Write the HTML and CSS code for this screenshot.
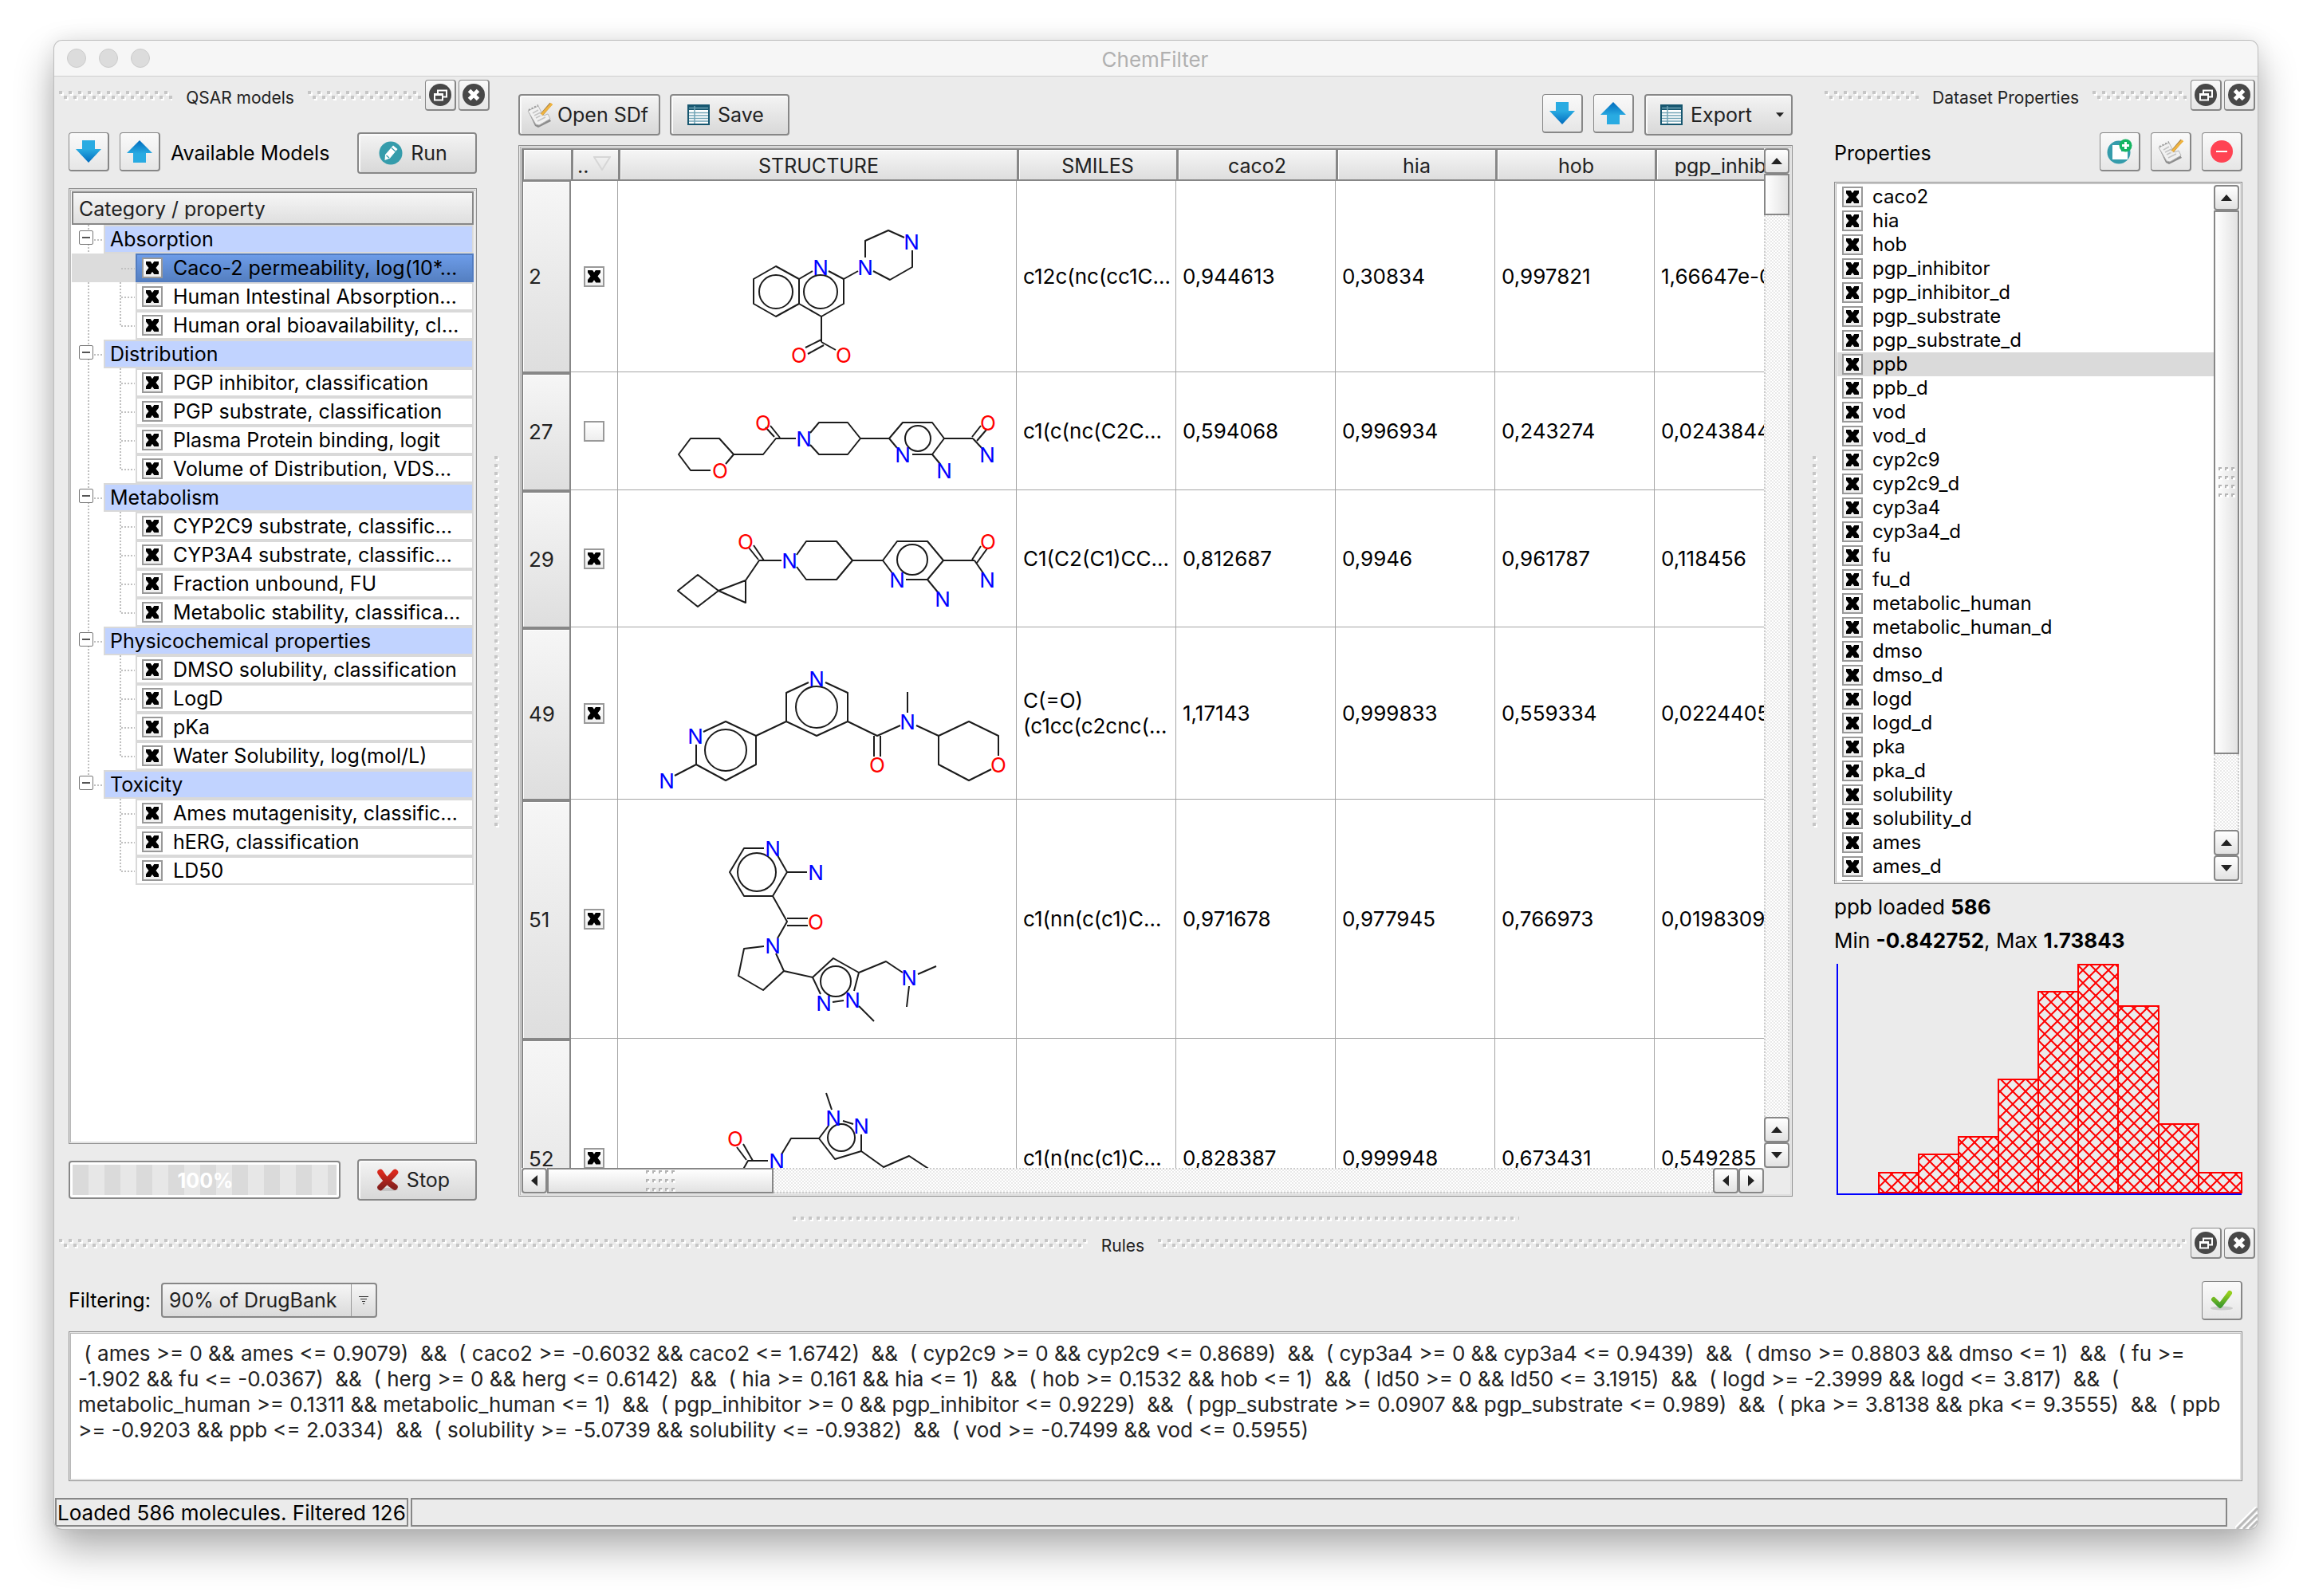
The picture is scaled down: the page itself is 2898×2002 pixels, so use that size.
FILE: index.html
```html
<!DOCTYPE html>
<html lang="en">
<head>
<meta charset="utf-8">
<title>ChemFilter</title>
<link rel="stylesheet" href="styles.css">
</head>
<body>
<svg class="defs" aria-hidden="true">
  <defs>
    <pattern id="zigzag" width="12" height="12" patternUnits="userSpaceOnUse">
      <path fill="#fff" d="M2 2h4v4h-4zM8 8h4v4h-4z"/>
      <path fill="#c6c6c6" d="M0 0h4v4h-4zM6 6h4v4h-4z"/>
    </pattern>
    <pattern id="dots" width="10" height="10" patternUnits="userSpaceOnUse">
      <path fill="#fff" d="M2 2h4v4h-4z"/>
      <path fill="#c6c6c6" d="M0 0h4v4h-4z"/>
    </pattern>
    <pattern id="knurl" width="8" height="11" patternUnits="userSpaceOnUse">
      <path fill="#fff" d="M2 2h3v3h-3z"/>
      <path fill="#b4b4b4" d="M0 0h4v2h-2v2h-2z"/>
    </pattern>
    <pattern id="hatch" width="16" height="16" patternUnits="userSpaceOnUse">
      <path d="M-1 -1L17 17M17 -1L-1 17" stroke="#f00" stroke-width="2"/>
    </pattern>
    <linearGradient id="blueDown" x1="0" y1="0" x2="0" y2="1"><stop offset=".4" stop-color="#29abe2"/><stop offset="1" stop-color="#006bbd"/></linearGradient>
    <linearGradient id="blueUp" x1="0" y1="0" x2="0" y2="1"><stop offset="0" stop-color="#006bbd"/><stop offset=".6" stop-color="#29abe2"/></linearGradient>
    <linearGradient id="red" x1="0" y1="0" x2="0" y2="1"><stop offset="0" stop-color="#d9281c"/><stop offset="1" stop-color="#86201d"/></linearGradient>
    <linearGradient id="green" x1="0" y1="0" x2="0" y2="1"><stop offset="0" stop-color="#97cf1c"/><stop offset="1" stop-color="#3f9a2c"/></linearGradient>
  </defs>
  <symbol id="i-down" viewBox="0 0 32 32"><path fill="url(#blueDown)" d="M8 2h16v11h8L16 30 0 13h8z"/></symbol>
  <symbol id="i-up" viewBox="0 0 32 32"><path fill="url(#blueUp)" d="M16 2l16 16h-8v12H8V18H0z"/></symbol>
  <symbol id="i-float" viewBox="0 0 28 28"><circle cx="14" cy="14" r="14" fill="#484848"/><path fill="none" stroke="#fff" stroke-width="2" d="M11 12V8.500h11v8h-4M7 13h10v7.500H7z"/><path stroke="#fff" stroke-width="3" d="M6 13.500h12"/></symbol>
  <symbol id="i-close" viewBox="0 0 28 28"><circle cx="14" cy="14" r="14" fill="#484848"/><path stroke="#fff" stroke-width="5" d="M8.500 8.500l11 11M19.500 8.500l-11 11"/></symbol>
  <symbol id="i-edit" viewBox="0 0 30 30"><circle cx="15" cy="15" r="14.500" fill="#359cab"/><path fill="#fff" d="M18 5.500l5.500 4.500L14 21.500 7.500 24 8 17z"/><path stroke="#359cab" stroke-width="1.300" d="M16 8.500l5 4.500M9.500 18l3.500 3"/></symbol>
  <symbol id="i-pad" viewBox="0 0 32 32"><path fill="#8c8c8c" d="M1 11l4 3 8 14 15-7 2 3-16 8-4-2z"/><path fill="#f1f1f1" stroke="#b5b5b5" stroke-width="1" d="M1 11l13-6 3 6 4 6 5-2 3 6-14 8-4-1z"/><path stroke="#c4c4c4" stroke-width="1.500" d="M7 14l7-4M9 17l8-4M11 20l8-4M13 24l10-5" /><path stroke="#9a9a9a" stroke-width="2" stroke-dasharray="2 2" d="M2 10l12-6"/><path stroke="#a58048" stroke-width="4" d="M18 16L30 2"/><path stroke="#f0b440" stroke-width="3" d="M18 16L31 2"/><path stroke="#e6e6e6" stroke-width="3" d="M16.500 18l2-2"/></symbol>
  <symbol id="i-sheet" viewBox="0 0 28 26"><path fill="#16566f" d="M0 0h28v26H0z"/><path fill="#fff" d="M2 7h24v17H2z"/><path stroke="#6fa3b5" stroke-width="1.600" d="M2 10.500h24M2 14h24M2 17.500h24M2 21h24M2 4.500h24"/><path stroke="#6fa3b5" stroke-width="1.500" d="M9 2v22"/></symbol>
  <symbol id="i-stop" viewBox="0 0 28 28"><ellipse cx="14" cy="26" rx="13" ry="2" fill="#c4c4c4"/><path fill="none" stroke="url(#red)" stroke-width="7.500" stroke-linecap="round" d="M5 4.500Q12 16 23 23M23.500 4.500Q18 11 5 23.500"/></symbol>
  <symbol id="i-add" viewBox="0 0 32 32"><circle cx="15" cy="17" r="14.500" fill="#359cab"/><path fill="#fff" d="M7 8h11v8h8v10H7z"/><circle cx="23.500" cy="8.500" r="8" fill="#16b562"/><path fill="#fff" d="M22 4h3v3h3v3h-3v3h-3v-3h-3v-3h3z"/></symbol>
  <symbol id="i-minus" viewBox="0 0 30 30"><circle cx="15" cy="15" r="14" fill="#ff4353"/><path fill="#fff" d="M8 14h14v2H8z"/></symbol>
  <symbol id="i-check" viewBox="0 0 28 26"><ellipse cx="14" cy="23" rx="14" ry="2.500" fill="#ccc"/><path fill="none" stroke="url(#green)" stroke-width="6" stroke-linecap="round" stroke-linejoin="round" d="M4 12l8 8L24 4"/></symbol>
  <symbol id="i-tri-up" viewBox="0 0 14 8"><path fill="#222" d="M7 0l7 8H0z"/></symbol>
  <symbol id="i-tri-down" viewBox="0 0 14 8"><path fill="#222" d="M0 0h14L7 8z"/></symbol>
  <symbol id="i-tri-left" viewBox="0 0 8 14"><path fill="#222" d="M8 0v14L0 7z"/></symbol>
  <symbol id="i-tri-right" viewBox="0 0 8 14"><path fill="#222" d="M0 0l8 7-8 7z"/></symbol>
</svg>

<div class="window">
  <header class="titlebar">
    <div class="lights"><i></i><i></i><i></i></div>
    <h1>ChemFilter</h1>
  </header>

  <main class="panes">
    <section class="dock dock-left">
      <div class="dock-title">
        <svg class="grip"><rect width="100%" height="100%" fill="url(#zigzag)"/></svg>
        <h2>QSAR models</h2>
        <svg class="grip"><rect width="100%" height="100%" fill="url(#zigzag)"/></svg>
        <div class="dock-buttons">
          <button class="tool mini" aria-label="Float"><svg width="28" height="28"><use href="#i-float"/></svg></button>
          <button class="tool mini" aria-label="Close"><svg width="28" height="28"><use href="#i-close"/></svg></button>
        </div>
      </div>
      <div class="dock-body">
        <div class="toolbar">
          <button class="tool" aria-label="Move down"><svg width="32" height="32"><use href="#i-down"/></svg></button>
          <button class="tool" aria-label="Move up"><svg width="32" height="32"><use href="#i-up"/></svg></button>
          <span class="caption">Available Models</span>
          <button class="push wide"><svg width="30" height="30"><use href="#i-edit"/></svg>Run</button>
        </div>
        <div class="frame tree">
          <div class="tree-head"><span class="cut clip">Category / property</span></div>
          <ul class="groups">
            <li><div class="group"><button aria-label="Collapse"></button><span>Absorption</span></div>
              <ul>
                <li class="selected"><label><input type="checkbox" checked>Caco-2 permeability, log(10*…</label></li>
                <li><label><input type="checkbox" checked>Human Intestinal Absorption…</label></li>
                <li><label><input type="checkbox" checked>Human oral bioavailability, cl…</label></li>
              </ul></li>
            <li><div class="group"><button aria-label="Collapse"></button><span>Distribution</span></div>
              <ul>
                <li><label><input type="checkbox" checked>PGP inhibitor, classification</label></li>
                <li><label><input type="checkbox" checked>PGP substrate, classification</label></li>
                <li><label><input type="checkbox" checked>Plasma Protein binding, logit</label></li>
                <li><label><input type="checkbox" checked>Volume of Distribution, VDS…</label></li>
              </ul></li>
            <li><div class="group"><button aria-label="Collapse"></button><span>Metabolism</span></div>
              <ul>
                <li><label><input type="checkbox" checked>CYP2C9 substrate, classific…</label></li>
                <li><label><input type="checkbox" checked>CYP3A4 substrate, classific…</label></li>
                <li><label><input type="checkbox" checked>Fraction unbound, FU</label></li>
                <li><label><input type="checkbox" checked>Metabolic stability, classifica…</label></li>
              </ul></li>
            <li><div class="group"><button aria-label="Collapse"></button><span>Physicochemical properties</span></div>
              <ul>
                <li><label><input type="checkbox" checked>DMSO solubility, classification</label></li>
                <li><label><input type="checkbox" checked>LogD</label></li>
                <li><label><input type="checkbox" checked>pKa</label></li>
                <li><label><input type="checkbox" checked>Water Solubility, log(mol/L)</label></li>
              </ul></li>
            <li><div class="group"><button aria-label="Collapse"></button><span>Toxicity</span></div>
              <ul>
                <li><label><input type="checkbox" checked>Ames mutagenisity, classific…</label></li>
                <li><label><input type="checkbox" checked>hERG, classification</label></li>
                <li><label><input type="checkbox" checked>LD50</label></li>
              </ul></li>
          </ul>
        </div>
        <div class="runbar">
          <div class="meter"><progress id="run" max="100" value="100" aria-label="Progress"></progress><label for="run">100%</label></div>
          <button class="push wide"><svg width="28" height="28"><use href="#i-stop"/></svg>Stop</button>
        </div>
      </div>
    </section>

    <div class="splitter"><svg class="dots-v"><rect width="100%" height="100%" fill="url(#dots)"/></svg></div>

    <section class="center">
      <div class="toolbar">
        <button class="push open"><svg width="32" height="32"><use href="#i-pad"/></svg>Open SDf</button>
        <button class="push wide"><svg width="28" height="26"><use href="#i-sheet"/></svg>Save</button>
        <div class="right-tools">
          <button class="tool" aria-label="Import"><svg width="32" height="32"><use href="#i-down"/></svg></button>
          <button class="tool" aria-label="Upload"><svg width="32" height="32"><use href="#i-up"/></svg></button>
          <button class="push export"><svg width="28" height="26"><use href="#i-sheet"/></svg>Export<svg class="caret" width="10" height="6"><use href="#i-tri-down"/></svg></button>
        </div>
      </div>
      <div class="frame grid-frame">
        <div class="viewport">
          <table class="mols">
            <colgroup><col class="c-num"><col class="c-chk"><col class="c-mol"><col class="c-val"><col class="c-val"><col class="c-val"><col class="c-val"><col class="c-val"></colgroup>
            <thead><tr>
              <th></th>
              <th class="sorted"><div><span class="cut">..</span><svg width="22" height="18"><path d="M1 1h20L11 17z" fill="none" stroke="#d6d6d6" stroke-width="2"/></svg></div></th>
              <th><span class="cut">STRUCTURE</span></th><th><span class="cut">SMILES</span></th><th><span class="cut">caco2</span></th><th><span class="cut">hia</span></th><th><span class="cut">hob</span></th><th><span class="cut clip">pgp_inhibitor</span></th>
            </tr></thead>
            <tbody>
              <tr>
                <th>2</th><td class="chk"><input type="checkbox" checked aria-label="Select 2"></td>
                <td class="mol"><svg width="499" height="239">
                  <path d="M170 123L198 107L227 123V154L198 170L170 154ZM227 123L244 113M264 113L283 123V154L255 170L227 154M283 123L301 113M310 96V75L339 62L359 71M369 87V108L341 124L320 113M255 170V202M255 199L235 209M258 206L238 217M255 202L273 212"/>
                  <circle cx="198" cy="139" r="21"/><circle cx="254" cy="139" r="21"/>
                  <text x="254" y="118">N</text><text x="310" y="118">N</text><text x="368" y="86">N</text>
                  <text class="o" x="227" y="228">O</text><text class="o" x="283" y="228">O</text></svg></td>
                <td>c12c(nc(cc1C…</td><td>0,944613</td><td>0,30834</td><td>0,997821</td><td>1,66647e-05</td>
              </tr>
              <tr>
                <th>27</th><td class="chk"><input type="checkbox" aria-label="Select 27"></td>
                <td class="mol"><svg width="499" height="147">
                  <path d="M135 115L145 103L127 83H91L76 103L91 123H116M145 103H182L198 83H223M196 81L185 69M203 82L191 67M241 76L252 63H288L304 83L288 103H252L241 91M304 83H340L357 63H394L409 83L394 103H369M340 83L350 95M394 103L404 115M409 83H445M444 81L455 67M450 86L462 72M445 83L458 97"/>
                  <circle cx="376" cy="83" r="16"/>
                  <text class="o" x="182" y="73">O</text><text class="o" x="128" y="133">O</text><text x="233" y="93">N</text><text x="357" y="113">N</text><text x="409" y="133">N</text><text class="o" x="464" y="73">O</text><text x="463" y="113">N</text></svg></td>
                <td>c1(c(nc(C2C…</td><td>0,594068</td><td>0,996934</td><td>0,243274</td><td>0,0243844</td>
              </tr>
              <tr>
                <th>29</th><td class="chk"><input type="checkbox" checked aria-label="Select 29"></td>
                <td class="mol"><svg width="499" height="171">
                  <path d="M126 126L100 106L75 126L100 146ZM126 126L160 113V141ZM160 113L177 88H205M176 87L164 72M183 88L170 69M224 81L236 64H274L294 88L274 112H236L224 96M294 88H332L350 64H388L408 88L388 112H361M332 88L344 104M388 112L402 129M408 88H447M444 87L455 70M450 91L463 73M447 88L458 104"/>
                  <circle cx="369" cy="87" r="19"/>
                  <text class="o" x="160" y="74">O</text><text x="215" y="98">N</text><text x="350" y="122">N</text><text x="407" y="146">N</text><text class="o" x="464" y="74">O</text><text x="463" y="122">N</text></svg></td>
                <td>C1(C2(C1)CC…</td><td>0,812687</td><td>0,9946</td><td>0,961787</td><td>0,118456</td>
              </tr>
              <tr>
                <th>49</th><td class="chk"><input type="checkbox" checked aria-label="Select 49"></td>
                <td class="mol"><svg width="499" height="215">
                  <path d="M239 69L211 82V118L249 136L288 118V82L260 69M211 118L173 136L135 118L107 131M98 147V172L135 192L173 172V136M98 172L71 186M288 118L325 136L354 123M321 136V162M329 136V162M363 107V81M374 123L402 136L440 118L477 136V161M468 178L440 192L402 172V136"/>
                  <circle cx="249" cy="100" r="26"/><circle cx="135" cy="154" r="26"/>
                  <text x="249" y="74">N</text><text x="97" y="146">N</text><text x="61" y="202">N</text><text class="o" x="325" y="182">O</text><text x="363" y="128">N</text><text class="o" x="477" y="182">O</text></svg></td>
                <td>C(=O)<br>(c1cc(c2cnc(…</td><td>1,17143</td><td>0,999833</td><td>0,559334</td><td>0,0224405</td>
              </tr>
              <tr>
                <th>51</th><td class="chk"><input type="checkbox" checked aria-label="Select 51"></td>
                <td class="mol"><svg width="499" height="299">
                  <path d="M183 61H158L140 91L158 121H194L212 91L200 70M212 91H237M194 121L212 153L200 174M212 149H238M212 158H238M183 184L158 187L151 221L182 239L208 215L198 193M208 215L244 223L270 199L302 217L296 240M244 223L254 244M269 254L283 252M302 259L321 278M302 217L336 203L357 217M376 219L399 209M365 234L362 260"/>
                  <circle cx="174" cy="91" r="24"/><circle cx="273" cy="228" r="19"/>
                  <text x="194" y="71">N</text><text x="248" y="101">N</text><text class="o" x="248" y="163">O</text><text x="194" y="193">N</text><text x="258" y="265">N</text><text x="294" y="261">N</text><text x="365" y="233">N</text></svg></td>
                <td>c1(nn(c(c1)C…</td><td>0,971678</td><td>0,977945</td><td>0,766973</td><td>0,0198309</td>
              </tr>
              <tr>
                <th>52</th><td class="chk"><input type="checkbox" checked aria-label="Select 52"></td>
                <td class="mol"><svg width="499" height="299">
                  <path d="M261 68L268 89M282 103L295 107M264 109L252 125L272 151L305 141V120M252 125H217L205 145M188 153H163L150 176M161 152L149 136M169 153L157 132M305 141L333 161L365 147L400 170"/>
                  <circle cx="280" cy="124" r="17"/>
                  <text x="270" y="109">N</text><text x="305" y="119">N</text><text x="199" y="163">N</text><text class="o" x="147" y="135">O</text></svg></td>
                <td>c1(n(nc(c1)C…</td><td>0,828387</td><td>0,999948</td><td>0,673431</td><td>0,549285</td>
              </tr>
            </tbody>
          </table>
        </div>
        <div class="scroll vertical">
          <button aria-label="Scroll up"><svg width="14" height="8"><use href="#i-tri-up"/></svg></button>
          <div class="thumb thumb-rows"></div>
          <div class="track"></div>
          <button aria-label="Scroll up"><svg width="14" height="8"><use href="#i-tri-up"/></svg></button>
          <button aria-label="Scroll down"><svg width="14" height="8"><use href="#i-tri-down"/></svg></button>
        </div>
        <div class="scroll horizontal">
          <button aria-label="Scroll left"><svg width="8" height="14"><use href="#i-tri-left"/></svg></button>
          <div class="thumb thumb-cols"><svg width="37" height="27"><rect width="100%" height="100%" fill="url(#knurl)"/></svg></div>
          <div class="track"></div>
          <button aria-label="Scroll left"><svg width="8" height="14"><use href="#i-tri-left"/></svg></button>
          <button aria-label="Scroll right"><svg width="8" height="14"><use href="#i-tri-right"/></svg></button>
        </div>
      </div>
    </section>

    <div class="splitter"><svg class="dots-v"><rect width="100%" height="100%" fill="url(#dots)"/></svg></div>

    <section class="dock dock-right">
      <div class="dock-title">
        <svg class="grip"><rect width="100%" height="100%" fill="url(#zigzag)"/></svg>
        <h2>Dataset Properties</h2>
        <svg class="grip"><rect width="100%" height="100%" fill="url(#zigzag)"/></svg>
        <div class="dock-buttons">
          <button class="tool mini" aria-label="Float"><svg width="28" height="28"><use href="#i-float"/></svg></button>
          <button class="tool mini" aria-label="Close"><svg width="28" height="28"><use href="#i-close"/></svg></button>
        </div>
      </div>
      <div class="dock-body">
        <div class="toolbar">
          <span class="caption">Properties</span>
          <div class="right-tools">
            <button class="tool" aria-label="Add"><svg width="32" height="32"><use href="#i-add"/></svg></button>
            <button class="tool" aria-label="Edit"><svg width="32" height="32"><use href="#i-pad"/></svg></button>
            <button class="tool" aria-label="Remove"><svg width="30" height="30"><use href="#i-minus"/></svg></button>
          </div>
        </div>
        <div class="frame list">
          <ul>
            <li><label><input type="checkbox" checked>caco2</label></li>
            <li><label><input type="checkbox" checked>hia</label></li>
            <li><label><input type="checkbox" checked>hob</label></li>
            <li><label><input type="checkbox" checked>pgp_inhibitor</label></li>
            <li><label><input type="checkbox" checked>pgp_inhibitor_d</label></li>
            <li><label><input type="checkbox" checked>pgp_substrate</label></li>
            <li><label><input type="checkbox" checked>pgp_substrate_d</label></li>
            <li class="current"><label><input type="checkbox" checked>ppb</label></li>
            <li><label><input type="checkbox" checked>ppb_d</label></li>
            <li><label><input type="checkbox" checked>vod</label></li>
            <li><label><input type="checkbox" checked>vod_d</label></li>
            <li><label><input type="checkbox" checked>cyp2c9</label></li>
            <li><label><input type="checkbox" checked>cyp2c9_d</label></li>
            <li><label><input type="checkbox" checked>cyp3a4</label></li>
            <li><label><input type="checkbox" checked>cyp3a4_d</label></li>
            <li><label><input type="checkbox" checked>fu</label></li>
            <li><label><input type="checkbox" checked>fu_d</label></li>
            <li><label><input type="checkbox" checked>metabolic_human</label></li>
            <li><label><input type="checkbox" checked>metabolic_human_d</label></li>
            <li><label><input type="checkbox" checked>dmso</label></li>
            <li><label><input type="checkbox" checked>dmso_d</label></li>
            <li><label><input type="checkbox" checked>logd</label></li>
            <li><label><input type="checkbox" checked>logd_d</label></li>
            <li><label><input type="checkbox" checked>pka</label></li>
            <li><label><input type="checkbox" checked>pka_d</label></li>
            <li><label><input type="checkbox" checked>solubility</label></li>
            <li><label><input type="checkbox" checked>solubility_d</label></li>
            <li><label><input type="checkbox" checked>ames</label></li>
            <li><label><input type="checkbox" checked>ames_d</label></li>
            <li><label><input type="checkbox" checked aria-label="herg"></label></li>
          </ul>
          <div class="scroll vertical">
            <button aria-label="Scroll up"><svg width="14" height="8"><use href="#i-tri-up"/></svg></button>
            <div class="thumb thumb-props"><svg width="21" height="38"><rect width="100%" height="100%" fill="url(#knurl)"/></svg></div>
            <div class="track"></div>
            <button aria-label="Scroll up"><svg width="14" height="8"><use href="#i-tri-up"/></svg></button>
            <button aria-label="Scroll down"><svg width="14" height="8"><use href="#i-tri-down"/></svg></button>
          </div>
        </div>
        <p class="stat">ppb loaded <b>586</b></p>
        <p class="stat">Min <b>-0.842752</b>, Max <b>1.73843</b></p>
        <svg class="chart" viewBox="0 0 512 290" shape-rendering="crispEdges">
          <path d="M4 0V289H511" fill="none" stroke="#00f" stroke-width="2"/>
          <g fill="url(#hatch)" stroke="#f00" stroke-width="2">
            <rect x="56" y="262" width="50" height="25"/><rect x="106" y="239" width="50" height="48"/><rect x="156" y="217" width="50" height="70"/><rect x="206" y="145" width="50" height="142"/><rect x="256" y="35" width="50" height="252"/><rect x="306" y="1" width="50" height="286"/><rect x="356" y="53" width="51" height="234"/><rect x="407" y="201" width="50" height="86"/><rect x="457" y="262" width="54" height="25"/>
          </g>
        </svg>
      </div>
    </section>
  </main>

  <div class="splitter flat"><svg class="dots-h"><rect width="100%" height="100%" fill="url(#dots)"/></svg></div>

  <section class="dock rules">
    <div class="dock-title">
      <svg class="grip"><rect width="100%" height="100%" fill="url(#zigzag)"/></svg>
      <h2>Rules</h2>
      <svg class="grip"><rect width="100%" height="100%" fill="url(#zigzag)"/></svg>
      <div class="dock-buttons">
        <button class="tool mini" aria-label="Float"><svg width="28" height="28"><use href="#i-float"/></svg></button>
        <button class="tool mini" aria-label="Close"><svg width="28" height="28"><use href="#i-close"/></svg></button>
      </div>
    </div>
    <div class="dock-body">
      <div class="toolbar filter">
        <label for="preset">Filtering:</label>
        <div class="combo">
          <select id="preset"><option>90% of DrugBank</option></select>
          <svg width="14" height="10"><path stroke="#333" stroke-width="1" d="M1 .5h12M3 3.500h8M5 6.500h4M6 9.500h2"/></svg>
        </div>
        <div class="right-tools"><button class="tool" aria-label="Apply"><svg width="28" height="26"><use href="#i-check"/></svg></button></div>
      </div>
      <textarea class="frame" aria-label="Rules" wrap="off" spellcheck="false"> ( ames &gt;= 0 &amp;&amp; ames &lt;= 0.9079)  &amp;&amp;  ( caco2 &gt;= -0.6032 &amp;&amp; caco2 &lt;= 1.6742)  &amp;&amp;  ( cyp2c9 &gt;= 0 &amp;&amp; cyp2c9 &lt;= 0.8689)  &amp;&amp;  ( cyp3a4 &gt;= 0 &amp;&amp; cyp3a4 &lt;= 0.9439)  &amp;&amp;  ( dmso &gt;= 0.8803 &amp;&amp; dmso &lt;= 1)  &amp;&amp;  ( fu &gt;=
-1.902 &amp;&amp; fu &lt;= -0.0367)  &amp;&amp;  ( herg &gt;= 0 &amp;&amp; herg &lt;= 0.6142)  &amp;&amp;  ( hia &gt;= 0.161 &amp;&amp; hia &lt;= 1)  &amp;&amp;  ( hob &gt;= 0.1532 &amp;&amp; hob &lt;= 1)  &amp;&amp;  ( ld50 &gt;= 0 &amp;&amp; ld50 &lt;= 3.1915)  &amp;&amp;  ( logd &gt;= -2.3999 &amp;&amp; logd &lt;= 3.817)  &amp;&amp;  (
metabolic_human &gt;= 0.1311 &amp;&amp; metabolic_human &lt;= 1)  &amp;&amp;  ( pgp_inhibitor &gt;= 0 &amp;&amp; pgp_inhibitor &lt;= 0.9229)  &amp;&amp;  ( pgp_substrate &gt;= 0.0907 &amp;&amp; pgp_substrate &lt;= 0.989)  &amp;&amp;  ( pka &gt;= 3.8138 &amp;&amp; pka &lt;= 9.3555)  &amp;&amp;  ( ppb
&gt;= -0.9203 &amp;&amp; ppb &lt;= 2.0334)  &amp;&amp;  ( solubility &gt;= -5.0739 &amp;&amp; solubility &lt;= -0.9382)  &amp;&amp;  ( vod &gt;= -0.7499 &amp;&amp; vod &lt;= 0.5955)</textarea>
    </div>
  </section>

  <footer class="status">
    <div class="cell">Loaded 586 molecules. Filtered 126</div>
    <div class="cell rest"></div>
    <svg width="28" height="28"><path stroke="#fff" stroke-width="2" d="M-1 27L27 -1M7 28L28 7M15 28L28 15M23 28L28 23"/><path stroke="#b9b9b9" stroke-width="3" d="M2 28L28 2M10 28L28 10M18 28L28 18"/></svg>
  </footer>
</div>
</body>
</html>
```
FILE: styles.css
```css
:root {
  --chrome: #ebebeb;
  --edge: #878787;
  --line: #a5a5a5;
  --dot: #c0c0c0;
  --ink: #222;
}
* { box-sizing: border-box; }
body {
  margin: 0;
  height: 100vh;
  padding: 51px 67px 84px 68px;
  display: flex;
  background: #fff;
  font: 25px/32px Inter, "Liberation Sans", sans-serif;
  color: #000;
}
h1, h2, p, ul { margin: 0; padding: 0; font-weight: 400; list-style: none; }
button, select, textarea { font: inherit; color: var(--ink); margin: 0; }
svg { display: block; flex: none; }
.defs { position: absolute; width: 0; height: 0; }

.window {
  flex: 1;
  min-width: 0;
  display: flex;
  flex-direction: column;
  background: var(--chrome);
  border-radius: 10px;
  overflow: hidden;
  box-shadow: 0 0 0 1px #bdbdbd, 0 24px 50px rgba(0, 0, 0, .32), 0 0 26px rgba(0, 0, 0, .08);
}
.titlebar {
  height: 45px;
  flex: none;
  display: grid;
  grid-template-columns: 1fr auto 1fr;
  align-items: center;
  padding: 0 18px 0 16px;
  background: #f6f6f6;
  border-bottom: 1px solid #d0d0d0;
}
.titlebar h1 { font-size: 26px; line-height: 32px; color: #b0b0b0; padding-top: 4px; }
.lights { display: flex; gap: 16px; }
.lights i { width: 24px; height: 24px; border-radius: 50%; background: #dcdcdc; border: 1px solid #cbcbcb; }

.panes { flex: 1; min-height: 0; display: grid; grid-template-columns: 549px 12px minmax(0, 1fr) 12px 549px; }
.splitter { display: flex; align-items: center; justify-content: center; }
.splitter.flat { height: 22px; flex: none; }
.dots-v { width: 6px; height: 33%; }
.dots-h { width: 33%; height: 6px; }

.dock { display: flex; flex-direction: column; min-height: 0; min-width: 0; padding-top: 4px; }
.dock-title { display: flex; align-items: center; height: 39px; padding: 0 3px 0 6px; flex: none; }
.dock-title h2 { font-size: 21px; line-height: 28px; color: var(--ink); padding: 7px 17px 0; }
.grip { flex: 1; width: 0; height: 12px; }
.dock-buttons { display: flex; gap: 3px; margin-left: 5px; }
.dock-body { flex: 1; min-height: 0; display: flex; flex-direction: column; padding: 27px 19px 0 18px; }
.dock-left .dock-body { padding-bottom: 12px; }
.dock-right .dock-body { padding-bottom: 19px; }

.toolbar { display: flex; align-items: flex-start; flex: none; }
.right-tools { display: flex; gap: 13px; margin-left: auto; }
.caption { padding-top: 10px; }
.tool, .push {
  display: flex;
  align-items: center;
  justify-content: center;
  flex: none;
  padding: 0;
  border-style: solid;
  border-color: var(--edge);
  border-radius: 4px;
}
.tool { width: 51px; height: 49px; border-width: 1px 2px 2px 1px; background: linear-gradient(#fafafa, #e6e6e6); }
.tool.mini { width: 39px; height: 39px; }
.push {
  height: 52px;
  gap: 10px;
  border-width: 2px;
  background: linear-gradient(#f4f4f4, #d8d8d8);
  box-shadow: inset 1px 1px 0 1px #fbfbfb;
}
.wide { width: 150px; padding-right: 10px; }
.dock-left .toolbar { gap: 13px; }
.dock-left .toolbar .wide { margin-left: auto; }

.frame {
  border: 1px solid #8f8f8f;
  padding: 3px;
  background: #fff;
  box-shadow: inset 0 0 0 1px #e6e6e6, inset 2px 2px 0 0 #b5b5b5, inset -2px -2px 0 0 #dedede;
}
.cut { display: block; height: 33px; line-height: 40px; }
.clip { overflow: hidden; }

input[type=checkbox] {
  appearance: none;
  flex: none;
  width: 26px;
  height: 26px;
  margin: 0;
  padding: 3px;
  border: 2px solid #999;
  background: linear-gradient(#fff, #eee);
}
input[type=checkbox]:checked::before {
  content: "";
  display: block;
  height: 16px;
  background: #000;
  clip-path: polygon(0 0, 36% 0, 50% 20%, 64% 0, 100% 0, 100% 22%, 78% 50%, 100% 78%, 100% 100%, 64% 100%, 50% 80%, 36% 100%, 0 100%, 0 78%, 22% 50%, 0 22%);
}

/* model tree */
.tree { flex: 1; min-height: 0; margin-top: 18px; overflow: hidden; }
.tree-head { height: 42px; padding-left: 7px; border: 2px solid var(--edge); background: linear-gradient(#f6f6f6, #dfdfdf); color: var(--ink); }
.groups > li { background: repeating-linear-gradient(var(--dot) 0 2px, #0000 2px 4px) 20px 0 / 2px 100% no-repeat; }
.groups > li:last-child { background-size: 2px 18px; }
.groups ul { background: repeating-linear-gradient(var(--dot) 0 2px, #0000 2px 4px) 60px 0 / 2px calc(100% - 18px) no-repeat; }
.groups ul li { padding-left: 80px; background: repeating-linear-gradient(90deg, var(--dot) 0 2px, #0000 2px 4px) 62px 18px / 17px 2px no-repeat; }
.group { display: flex; align-items: center; height: 36px; padding-left: 9px; gap: 13px; background: repeating-linear-gradient(90deg, var(--dot) 0 2px, #0000 2px 4px) 28px 18px / 11px 2px no-repeat; }
.group button { width: 18px; height: 18px; margin-bottom: 4px; padding: 0; border: 1px solid #777; border-radius: 2px; background: linear-gradient(#555, #555) center / 10px 2px no-repeat, #fff; }
.group span { flex: 1; height: 36px; line-height: 32px; padding-left: 6px; background: #c1d3ff; border: 2px solid #d9d9d9; }
.groups label { display: flex; align-items: center; height: 36px; gap: 13px; padding-left: 6px; line-height: 32px; border: 2px solid #d9d9d9; background: #fff; white-space: nowrap; }
.groups .selected { background-color: #dcdcdc; }
.groups .selected label { background: linear-gradient(#6d9ce8, #5580c2); border-color: #527cc0; }

.runbar { display: flex; justify-content: space-between; align-items: center; margin-top: 19px; flex: none; }
.meter { display: grid; width: 341px; height: 48px; }
.meter > * { grid-area: 1 / 1; }
.meter label { place-self: center; padding-top: 2px; padding-left: 2px; color: #fff; font-weight: 700; }
progress { appearance: none; width: 100%; height: 48px; padding: 3px; border: 2px solid var(--edge); border-radius: 4px; background: #fff; }
progress::-webkit-progress-bar { background: #fff; }
progress::-webkit-progress-value { background: repeating-linear-gradient(90deg, #dadada 0 20px, #e7e7e7 20px 40px); }

/* molecule table */
.center { display: flex; flex-direction: column; min-height: 0; padding: 22px 22px 17px 21px; }
.open { width: 178px; margin-right: 12px; gap: 6px; padding-right: 4px; }
.export { width: 186px; justify-content: flex-start; padding: 0 9px 0 18px; }
.caret { margin-left: auto; }
.grid-frame { flex: 1; min-height: 0; margin-top: 12px; display: grid; grid-template: minmax(0, 1fr) 32px / minmax(0, 1fr) 32px; background: var(--chrome); }
.viewport { overflow: hidden; background: #fff; }
.mols { width: 1621px; table-layout: fixed; border-collapse: separate; border-spacing: 0; }
.c-num { width: 62px; }
.c-chk { width: 59px; }
.c-mol { width: 500px; }
.c-val { width: 200px; }
.mols th { font-weight: 400; color: var(--ink); padding: 0; }
.mols thead th { height: 41px; vertical-align: top; border: solid var(--edge); border-width: 2px 0 2px 3px; background: linear-gradient(#f6f6f6, #dedede); box-shadow: inset 1px 1px #fff; }
.sorted div { display: flex; gap: 6px; padding-left: 5px; }
.sorted svg { margin-top: 8px; }
.mols tbody th { font-size: 26px; text-align: left; padding-left: 7px; border: solid var(--edge); border-width: 3px 2px 1px 2px; background: linear-gradient(#f6f6f6, #dedede); box-shadow: inset 1px 1px #fff; }
.mols tbody tr:first-child th { border-top-width: 1px; }
.mols td { font-size: 26px; padding: 0 0 0 8px; border: solid var(--line); border-width: 0 1px 1px 0; white-space: nowrap; }
.mols .chk { padding: 0 0 0 16px; }
.mols .chk input { display: block; }
.mols .mol { padding: 0; }
.mol path, .mol circle { fill: none; stroke: #1c1c1c; stroke-width: 2; stroke-linejoin: round; }
.mol text { font-size: 26px; fill: #00f; text-anchor: middle; }
.mol .o { fill: #f00; }

.scroll { display: flex; }
.scroll.vertical { flex-direction: column; }
.scroll button, .thumb { display: flex; align-items: center; justify-content: center; flex: none; padding: 0; border: 2px solid var(--edge); background: linear-gradient(#fff, #e2e2e2); }
.scroll button { width: 32px; height: 32px; border-radius: 4px; }
.vertical .thumb { background: linear-gradient(90deg, #fff, #e2e2e2); }
.track { flex: 1; background: conic-gradient(#e9e9e9 25%, #fff 0 50%, #e9e9e9 0 75%, #fff 0) 0 0 / 4px 4px; }
.vertical .track { border: dotted #ccc; border-width: 0 2px; }
.horizontal .track { border: dotted #ccc; border-width: 2px 0; }
.thumb-rows { height: 52px; }
.thumb-cols { width: 284px; }
.thumb-props { height: 682px; }

/* property list */
.list { flex: 1; min-height: 0; margin-top: 13px; display: flex; overflow: hidden; }
.list ul { flex: 1; overflow: hidden; }
.list label { display: flex; align-items: center; gap: 12px; height: 30px; padding-left: 6px; font-size: 24px; line-height: 30px; }
.current { background: #dadada; }
.stat { font-size: 26px; line-height: 42px; flex: none; }
.list + .stat { margin-top: 8px; }
.chart { width: 100%; margin-top: 8px; }

/* rules */
.rules { flex: none; padding-top: 0; }
.filter { height: 50px; align-items: center; gap: 13px; }
.combo { position: relative; width: 271px; }
.combo select { display: block; appearance: none; width: 100%; height: 44px; padding: 0 0 0 8px; border: 2px solid var(--edge); border-radius: 4px; background: linear-gradient(#999, #999) 236px 0 / 1px 100% no-repeat, linear-gradient(#f6f6f6, #dadada); }
.combo svg { position: absolute; right: 10px; top: 17px; pointer-events: none; }
.rules textarea { display: block; width: 100%; height: 188px; margin-top: 14px; padding: 11px; resize: none; outline: 0; overflow: hidden; font-size: 26px; line-height: 32px; }
.status { display: flex; flex: none; gap: 3px; margin-top: 21px; padding-left: 1px; height: 39px; font-size: 26px; }
.status .cell { height: 36px; border: 2px solid var(--edge); padding: 0 1px; line-height: 34px; white-space: nowrap; }
.status .rest { flex: 1; margin-right: 7px; }
.status svg { align-self: flex-end; }
```
